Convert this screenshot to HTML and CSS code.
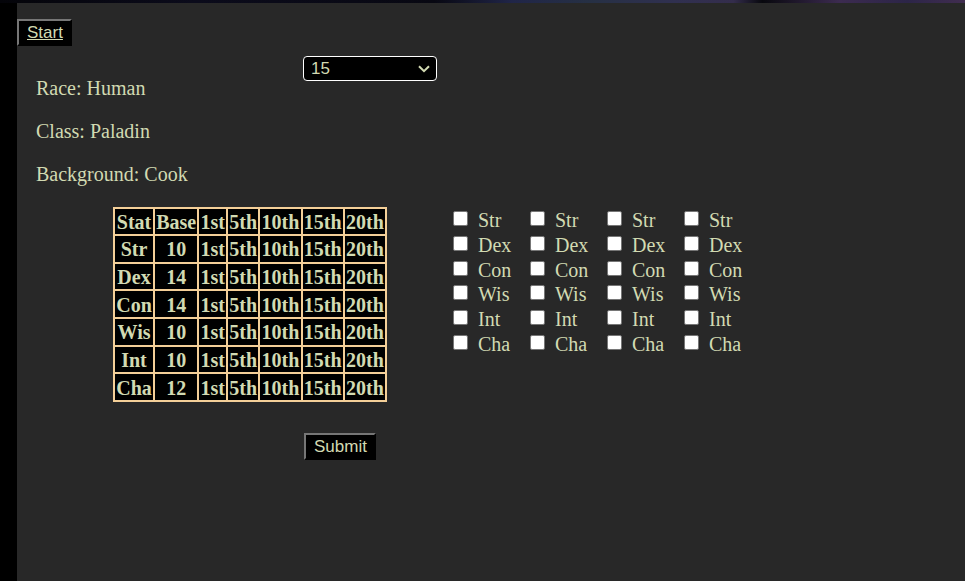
FILE: index.html
```
<!DOCTYPE html>
<html lang="en">
<head>
<meta charset="utf-8">
<meta name="viewport" content="width=device-width, initial-scale=1">
<title>Character</title>
<link rel="stylesheet" href="styles.css">
</head>
<body>
<main class="panel">
  <a class="btn start" href="#">Start</a>
  <form class="sheet">
    <div class="top">
      <div class="details">
        <p>Race: Human</p>
        <p>Class: Paladin</p>
        <p>Background: Cook</p>
      </div>
      <div class="level">
        <select aria-label="Level"><option>15</option><option>16</option></select>
        <svg class="chevron" viewBox="0 0 12 8" aria-hidden="true"><path d="M1 1.2L6 6.2L11 1.2"/></svg>
      </div>
    </div>
    <div class="stats">
      <table>
        <thead>
          <tr><th>Stat</th><th>Base</th><th>1st</th><th>5th</th><th>10th</th><th>15th</th><th>20th</th></tr>
        </thead>
        <tbody>
          <tr><th>Str</th><th>10</th><th>1st</th><th>5th</th><th>10th</th><th>15th</th><th>20th</th></tr>
          <tr><th>Dex</th><th>14</th><th>1st</th><th>5th</th><th>10th</th><th>15th</th><th>20th</th></tr>
          <tr><th>Con</th><th>14</th><th>1st</th><th>5th</th><th>10th</th><th>15th</th><th>20th</th></tr>
          <tr><th>Wis</th><th>10</th><th>1st</th><th>5th</th><th>10th</th><th>15th</th><th>20th</th></tr>
          <tr><th>Int</th><th>10</th><th>1st</th><th>5th</th><th>10th</th><th>15th</th><th>20th</th></tr>
          <tr><th>Cha</th><th>12</th><th>1st</th><th>5th</th><th>10th</th><th>15th</th><th>20th</th></tr>
        </tbody>
      </table>
      <div class="choices">
        <label><input type="checkbox">Str</label><label><input type="checkbox">Str</label><label><input type="checkbox">Str</label><label><input type="checkbox">Str</label>
        <label><input type="checkbox">Dex</label><label><input type="checkbox">Dex</label><label><input type="checkbox">Dex</label><label><input type="checkbox">Dex</label>
        <label><input type="checkbox">Con</label><label><input type="checkbox">Con</label><label><input type="checkbox">Con</label><label><input type="checkbox">Con</label>
        <label><input type="checkbox">Wis</label><label><input type="checkbox">Wis</label><label><input type="checkbox">Wis</label><label><input type="checkbox">Wis</label>
        <label><input type="checkbox">Int</label><label><input type="checkbox">Int</label><label><input type="checkbox">Int</label><label><input type="checkbox">Int</label>
        <label><input type="checkbox">Cha</label><label><input type="checkbox">Cha</label><label><input type="checkbox">Cha</label><label><input type="checkbox">Cha</label>
      </div>
    </div>
    <button class="btn submit" type="button">Submit</button>
  </form>
</main>
</body>
</html>
```
FILE: styles.css
```
* {
  box-sizing: border-box;
}

body {
  display: flex;
  min-height: 100vh;
  margin: 0;
  padding: 3px 0 0 17px;
  color: #d2dab2;
  font: 20px/23px "Liberation Serif", "Times New Roman", serif;
  background: #000 linear-gradient(90deg, #040409 0%, #0b0b1b 20%, #080812 45%, #202548 53%, #263044 61%, #303050 70%, #342d4c 76%, #08080e 79%, #3c2b50 87%, #2c2548 94%, #412d50 100%) 0 0 / 100% 3px no-repeat;
}

.panel {
  flex: 1;
  padding-top: 16px;
  background: #282828;
}

.btn {
  display: block;
  width: fit-content;
  height: 27px;
  padding: 1px 7px 1px 8px;
  border: 2px outset #767676;
  border-color: #767676 #212121 #212121 #767676;
  color: #d2dab2;
  background: #000;
  font: 17px/21px "Liberation Sans", Arial, sans-serif;
}

.sheet {
  padding: 10px 19px;
}

.top {
  display: flex;
}

.details {
  width: 267px;
  padding: 1px 0;
}

.details p {
  margin: 20px 0;
}

.level {
  position: relative;
  width: 134px;
  height: 25px;
}

.level select {
  width: 100%;
  height: 100%;
  padding: 0 7px;
  appearance: none;
  border: 1px solid #fff;
  border-radius: 4px;
  color: #d2dab2;
  background: #000;
  font: 17px/21px "Liberation Sans", Arial, sans-serif;
}

.chevron {
  position: absolute;
  top: 9px;
  right: 7px;
  width: 12px;
  height: 8px;
  pointer-events: none;
  fill: none;
  stroke: #d2dab2;
  stroke-width: 2;
}

.stats {
  display: flex;
  align-items: flex-start;
  gap: 66px;
  margin-left: 77px;
}

table {
  width: 274px;
  height: 195px;
  border-collapse: collapse;
  background: #000;
}

th {
  padding: 2px 1px 0;
  border: 2px solid #f4cf98;
}

.choices {
  display: grid;
  grid-template-columns: repeat(4, 77px);
  grid-template-rows: repeat(6, 1fr);
  height: 149px;
  margin-top: 1px;
}

.choices label {
  display: flex;
  align-items: center;
  gap: 10px;
}

.choices input {
  width: 15px;
  height: 15px;
  margin: 0 0 4px;
  appearance: none;
  border: 1px solid #767676;
  border-radius: 2px;
  background: #fff;
}

.choices input:checked {
  background: #767676;
}

.submit {
  margin: 31px 0 0 268px;
}
```
